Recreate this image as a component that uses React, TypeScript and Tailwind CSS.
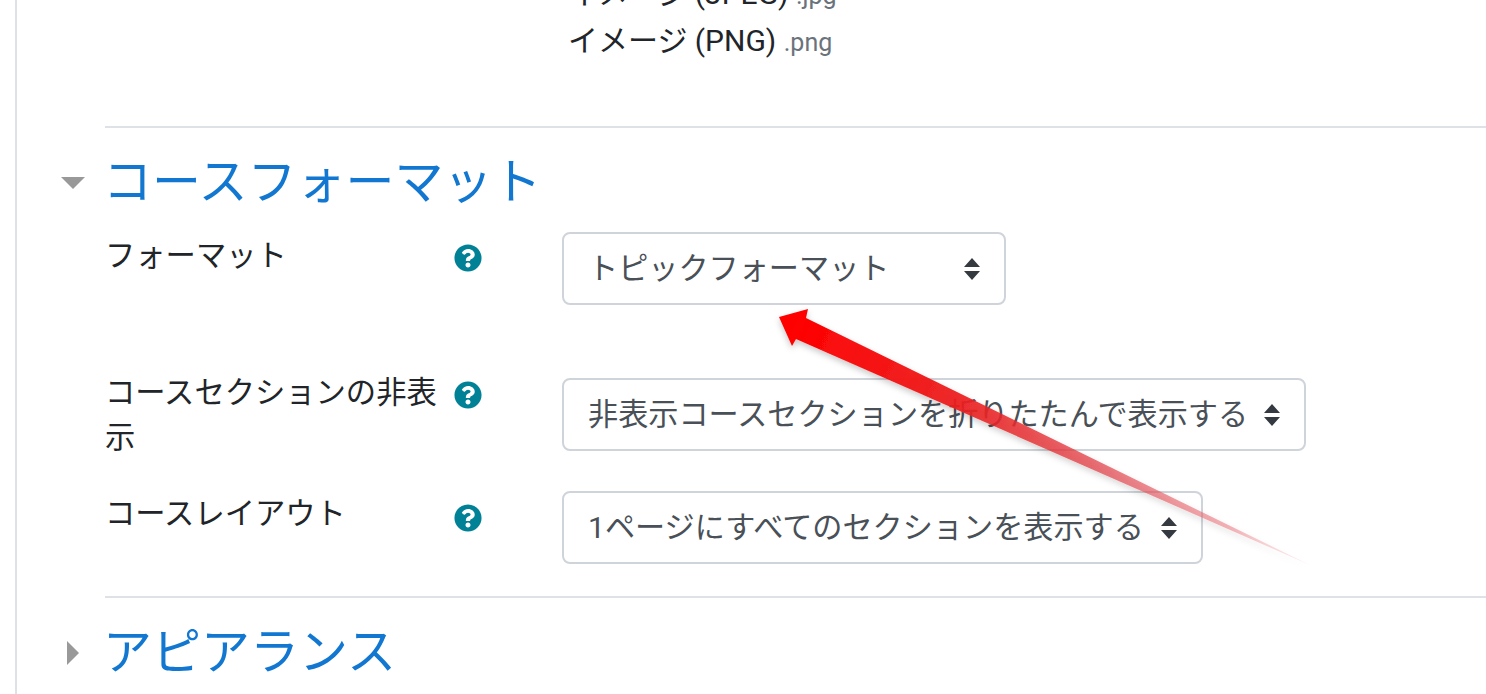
import { FaQuestionCircle } from "react-icons/fa";

const font = "font-['Roboto','Noto_Sans_CJK_JP',sans-serif]";

function SelectBox({ text, width }: { text: string; width: string }) {
  return (
    <div
      className={`flex h-[73px] items-center justify-between rounded-lg border-2 border-[#ced4da] bg-white pl-[24px] pr-[24px] text-[30.15px] text-[#495057] ${width}`}
    >
      <span className="whitespace-nowrap">{text}</span>
      <svg width="16" height="22" viewBox="0 0 16 22" className="shrink-0">
        <path d="M8 0 L16 9 L0 9 Z M8 22 L0 13 L16 13 Z" fill="#343a40" />
      </svg>
    </div>
  );
}

function HelpIcon() {
  return <FaQuestionCircle size={28} color="#008196" />;
}

function Heading({ open, text }: { open: boolean; text: string }) {
  return (
    <div className="flex items-center">
      <div className="w-[44px] shrink-0">
        {open ? (
          <svg width="24" height="12" viewBox="0 0 24 12">
            <path d="M0 0 H24 L12 12 Z" fill="#999999" />
          </svg>
        ) : (
          <svg width="12" height="24" viewBox="0 0 12 24" className="ml-[6px]">
            <path d="M0 0 L12 12 L0 24 Z" fill="#999999" />
          </svg>
        )}
      </div>
      <h3 className="-ml-[2px] whitespace-nowrap text-[49px] leading-[72px] text-[#1177d1]">{text}</h3>
    </div>
  );
}

export default function App() {
  return (
    <div className={`relative h-[694px] w-[1486px] overflow-hidden bg-white ${font}`}>
      <div className="ml-[15px] h-full overflow-hidden border-l-2 border-[#dee2e6] pl-[44px]">
        <div className="-mt-[30px] h-[156px] pl-[507px] text-[30px] leading-[45px] text-[#212529]">
          <div className="pt-[1px]">
            イメージ (JPEG) <span className="text-[25px] text-[#6a737b]">.jpg</span>
          </div>
          <div>
            イメージ (PNG) <span className="text-[25px] text-[#6a737b]">.png</span>
          </div>
        </div>

        <div className="ml-[44px] border-t-2 border-[#dee2e6]" />
        <div className="pt-[19px]">
          <Heading open text="コースフォーマット" />
        </div>

        {/* form rows */}
        <div className="mt-[13px] flex flex-col pl-[44px] text-[30.3px] leading-[45px] text-[#212529]">
          <div className="flex h-[138px] items-start">
            <div className="w-[349px] shrink-0 pt-[1px]">フォーマット</div>
            <div className="w-[108px] shrink-0 pt-[12px]">
              <HelpIcon />
            </div>
            <SelectBox text="トピックフォーマット" width="w-[444px]" />
          </div>
          <div className="flex h-[121px] items-start">
            <div className="w-[349px] shrink-0">コースセクションの非表示</div>
            <div className="w-[108px] shrink-0 pt-[11px]">
              <HelpIcon />
            </div>
            <div className="pt-[8px]">
              <SelectBox text="非表示コースセクションを折りたたんで表示する" width="w-[744px]" />
            </div>
          </div>
          <div className="flex h-[105px] items-start">
            <div className="w-[349px] shrink-0">コースレイアウト</div>
            <div className="w-[108px] shrink-0 pt-[13px]">
              <HelpIcon />
            </div>
            <SelectBox text="1ページにすべてのセクションを表示する" width="w-[641px]" />
          </div>
        </div>

        <div className="ml-[44px] border-t-2 border-[#dee2e6]" />
        <div className="pt-[19px]">
          <Heading open={false} text="アピアランス" />
        </div>
      </div>

      {/* annotation arrow drawn over the form */}
      <svg
        width="1486"
        height="694"
        viewBox="0 0 1486 694"
        className="pointer-events-none absolute left-0 top-0"
      >
        <defs>
          <linearGradient id="arrowFill" gradientUnits="userSpaceOnUse" x1="790" y1="320" x2="1310" y2="565">
            <stop offset="0" stopColor="#ff0000" />
            <stop offset="0.3" stopColor="#ee1c1c" stopOpacity="0.95" />
            <stop offset="0.6" stopColor="#e03a42" stopOpacity="0.7" />
            <stop offset="0.85" stopColor="#e86a72" stopOpacity="0.5" />
            <stop offset="1" stopColor="#ee9ca0" stopOpacity="0.15" />
          </linearGradient>
          <filter id="arrowShadow" x="-5%" y="-5%" width="110%" height="115%">
            <feDropShadow dx="0" dy="3" stdDeviation="3" floodColor="#000000" floodOpacity="0.22" />
          </filter>
        </defs>
        <path
          d="M779 317 L808 309 L806 318 L1312 566 L796 339 L792 346 Z"
          fill="url(#arrowFill)"
          filter="url(#arrowShadow)"
        />
      </svg>
    </div>
  );
}
